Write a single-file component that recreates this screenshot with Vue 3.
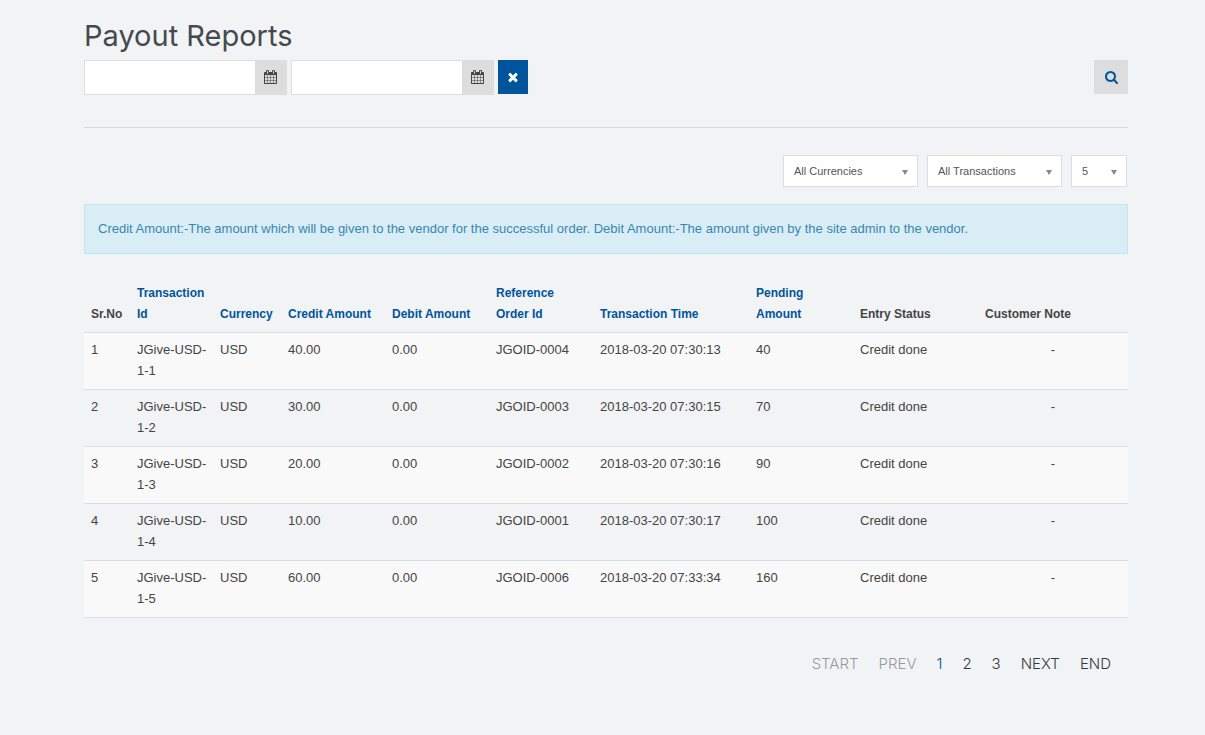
<script setup>
import { ref } from 'vue'

const from = ref('')
const to = ref('')
const currency = ref('All Currencies')
const type = ref('All Transactions')
const limit = ref('5')

const columns = [
  { label: 'Sr.No', key: 'sr' },
  { label: 'Transaction Id', key: 'id', sortable: true },
  { label: 'Currency', key: 'currency', sortable: true },
  { label: 'Credit Amount', key: 'credit', sortable: true },
  { label: 'Debit Amount', key: 'debit', sortable: true },
  { label: 'Reference Order Id', key: 'order', sortable: true },
  { label: 'Transaction Time', key: 'time', sortable: true },
  { label: 'Pending Amount', key: 'pending', sortable: true },
  { label: 'Entry Status', key: 'status' },
  { label: 'Customer Note', key: 'note' }
]

const rows = [
  ['40.00', 'JGOID-0004', '2018-03-20 07:30:13', '40'],
  ['30.00', 'JGOID-0003', '2018-03-20 07:30:15', '70'],
  ['20.00', 'JGOID-0002', '2018-03-20 07:30:16', '90'],
  ['10.00', 'JGOID-0001', '2018-03-20 07:30:17', '100'],
  ['60.00', 'JGOID-0006', '2018-03-20 07:33:34', '160']
].map(([credit, order, time, pending], i) => ({
  sr: i + 1,
  id: `JGive-USD-1-${i + 1}`,
  currency: 'USD',
  credit,
  debit: '0.00',
  order,
  time,
  pending,
  status: 'Credit done',
  note: '-'
}))

const pages = [
  { label: 'START', state: 'disabled' },
  { label: 'PREV', state: 'disabled' },
  { label: '1', state: 'current' },
  { label: '2' },
  { label: '3' },
  { label: 'NEXT' },
  { label: 'END' }
]

const calendarPath = 'M128 1664h288v-288h-288v288zm352 0h320v-288h-320v288zm-352-352h288v-320h-288v320zm352 0h320v-320h-320v320zm-352-384h288v-288h-288v288zm736 736h320v-288h-320v288zm-384-736h320v-288h-320v288zm768 736h288v-288h-288v288zm-384-352h320v-320h-320v320zm-352-864v-288q0-13-9.5-22.5t-22.5-9.5h-64q-13 0-22.5 9.5t-9.5 22.5v288q0 13 9.5 22.5t22.5 9.5h64q13 0 22.5-9.5t9.5-22.5zm736 864h288v-320h-288v320zm-384-384h320v-288h-320v288zm384 0h288v-288h-288v288zm32-480v-288q0-13-9.5-22.5t-22.5-9.5h-64q-13 0-22.5 9.5t-9.5 22.5v288q0 13 9.5 22.5t22.5 9.5h64q13 0 22.5-9.5t9.5-22.5zm384-64v1280q0 52-38 90t-90 38h-1408q-52 0-90-38t-38-90v-1280q0-52 38-90t90-38h128v-96q0-66 47-113t113-47h64q66 0 113 47t47 113v96h384v-96q0-66 47-113t113-47h64q66 0 113 47t47 113v96h128q52 0 90 38t38 90z'
</script>

<template>
  <main class="page">
    <h1>Payout Reports</h1>

    <form class="toolbar" @submit.prevent>
      <div class="date">
        <input v-model="from" type="text" aria-label="From date" />
        <button type="button" aria-label="Pick from date">
          <svg width="13" height="14" viewBox="0 0 1664 1792"><path :d="calendarPath" /></svg>
        </button>
      </div>
      <div class="date">
        <input v-model="to" type="text" aria-label="To date" />
        <button type="button" aria-label="Pick to date">
          <svg width="13" height="14" viewBox="0 0 1664 1792"><path :d="calendarPath" /></svg>
        </button>
      </div>
      <button class="clear" type="button" aria-label="Clear">
        <svg width="14" height="14" viewBox="0 0 1792 1792"><path d="M1490 1322q0 40-28 68l-136 136q-28 28-68 28t-68-28l-294-294-294 294q-28 28-68 28t-68-28l-136-136q-28-28-28-68t28-68l294-294-294-294q-28-28-28-68t28-68l136-136q28-28 68-28t68 28l294 294 294-294q28-28 68-28t68 28l136 136q28 28 28 68t-28 68l-294 294 294 294q28 28 28 68z" /></svg>
      </button>
      <button class="search" type="submit" aria-label="Search">
        <svg width="13" height="13" viewBox="64 128 1664 1664"><path d="M1216 832q0-185-131.500-316.500t-316.500-131.500-316.500 131.500-131.500 316.500 131.500 316.500 316.500 131.500 316.500-131.500 131.500-316.500zm512 832q0 52-38 90t-90 38q-54 0-90-38l-343-342q-179 124-399 124-143 0-273.500-55.500t-225-150-150-225-55.500-273.500 55.500-273.500 150-225 225-150 273.500-55.500 273.500 55.500 225 150 150 225 55.500 273.500q0 220-124 399l343 343q37 37 37 90z" /></svg>
      </button>
    </form>

    <div class="filters">
      <div class="select">
        <select v-model="currency" aria-label="Currency">
          <option>All Currencies</option>
          <option>USD</option>
        </select>
      </div>
      <div class="select">
        <select v-model="type" aria-label="Transaction type">
          <option>All Transactions</option>
          <option>Credits</option>
          <option>Debits</option>
        </select>
      </div>
      <div class="select small">
        <select v-model="limit" aria-label="Rows per page">
          <option>5</option>
          <option>10</option>
          <option>20</option>
        </select>
      </div>
    </div>

    <p class="notice">
      Credit Amount:-The amount which will be given to the vendor for the successful order. Debit Amount:-The amount given by the site admin to the vendor.
    </p>

    <table>
      <colgroup>
        <col v-for="c in columns" :key="c.key" :class="'col-' + c.key" />
      </colgroup>
      <thead>
        <tr>
          <th v-for="c in columns" :key="c.key" scope="col">
            <a v-if="c.sortable" href="#">{{ c.label }}</a>
            <template v-else>{{ c.label }}</template>
          </th>
        </tr>
      </thead>
      <tbody>
        <tr v-for="r in rows" :key="r.sr">
          <td v-for="c in columns" :key="c.key" :class="{ note: c.key === 'note' }">{{ r[c.key] }}</td>
        </tr>
      </tbody>
    </table>

    <nav class="pages" aria-label="Pagination">
      <a v-for="p in pages" :key="p.label" href="#" :class="p.state">{{ p.label }}</a>
    </nav>
  </main>
</template>

<style>
body {
  background: #f1f3f5;
}
</style>

<style scoped>
.page {
  padding: 16px 77px 40px 84px;
  color: #444;
  font-family: "Liberation Sans", Arial, sans-serif;
  font-size: 13px;
  line-height: 21px;
}
h1 {
  margin: 0 0 4px;
  font-family: Inter, sans-serif;
  font-size: 29px;
  font-weight: 400;
  line-height: 40px;
  color: #44494e;
}
button {
  display: flex;
  align-items: center;
  justify-content: center;
  padding: 0;
  border: 0;
  background: #ddd;
  color: #444;
}
svg {
  display: block;
  fill: currentColor;
}
.toolbar {
  display: flex;
  align-items: flex-start;
  gap: 4px;
  padding-bottom: 32px;
  border-bottom: 1px solid #d7dadd;
}
.date {
  display: flex;
  width: 203px;
  height: 35px;
}
.date input {
  flex: 1;
  min-width: 0;
  box-sizing: border-box;
  padding: 0 10px;
  border: 1px solid #ddd;
  border-right: 0;
  border-radius: 0;
  background: #fff;
  font: inherit;
}
.date button {
  width: 32px;
  padding: 0 1px 2px 0;
}
.clear {
  width: 30px;
  height: 34px;
  background: #00549b;
  color: #fff;
}
.search {
  width: 34px;
  height: 34px;
  margin-left: auto;
  color: #00549b;
}
.filters {
  display: flex;
  justify-content: flex-end;
  gap: 9px;
  padding: 27px 1px 17px 0;
}
.select {
  position: relative;
  width: 135px;
}
.select.small {
  width: 56px;
}
.select::after {
  content: "";
  position: absolute;
  right: 10px;
  top: 15px;
  border: 3px solid transparent;
  border-top: 5px solid #888;
  border-bottom: 0;
  pointer-events: none;
}
select {
  display: block;
  width: 100%;
  height: 32px;
  padding: 0 20px 0 10px;
  border: 1px solid #ddd;
  border-radius: 0;
  background: #fff;
  color: #555;
  font-family: inherit;
  font-size: 11px;
  appearance: none;
}
.notice {
  margin: 0 0 20px;
  padding: 14px 13px;
  border: 1px solid #bce8f1;
  background: #d9edf7;
  color: #3a87ad;
  line-height: 20px;
}
table {
  width: 100%;
  table-layout: fixed;
  border-collapse: separate;
  border-spacing: 0;
  border-bottom: 1px solid #dcdfe2;
}
.col-sr { width: 46px; }
.col-id { width: 83px; }
.col-currency { width: 68px; }
.col-credit, .col-debit, .col-order, .col-pending { width: 104px; }
.col-time { width: 156px; }
.col-status { width: 125px; }
.col-note { width: 150px; }
th, td {
  padding: 6px 0 8px 7px;
  text-align: left;
  vertical-align: top;
}
th {
  padding-top: 9px;
  padding-bottom: 7px;
  vertical-align: bottom;
  font-size: 12px;
  font-weight: 700;
}
th:nth-child(n + 6) {
  padding-right: 7px;
}
td {
  border-top: 1px solid #dcdfe2;
}
tbody tr:nth-child(odd) {
  background: #f9f9f9;
}
td.note {
  padding-right: 7px;
  text-align: center;
}
a {
  color: #00549b;
  text-decoration: none;
}
.pages {
  display: flex;
  justify-content: flex-end;
  gap: 20px;
  padding: 35px 17px 0 0;
  font-family: Inter, sans-serif;
  font-size: 15px;
  font-weight: 300;
}
.pages a {
  color: #33383d;
}
.pages .disabled {
  color: #999;
}
.pages .current {
  color: #00549b;
}
</style>
